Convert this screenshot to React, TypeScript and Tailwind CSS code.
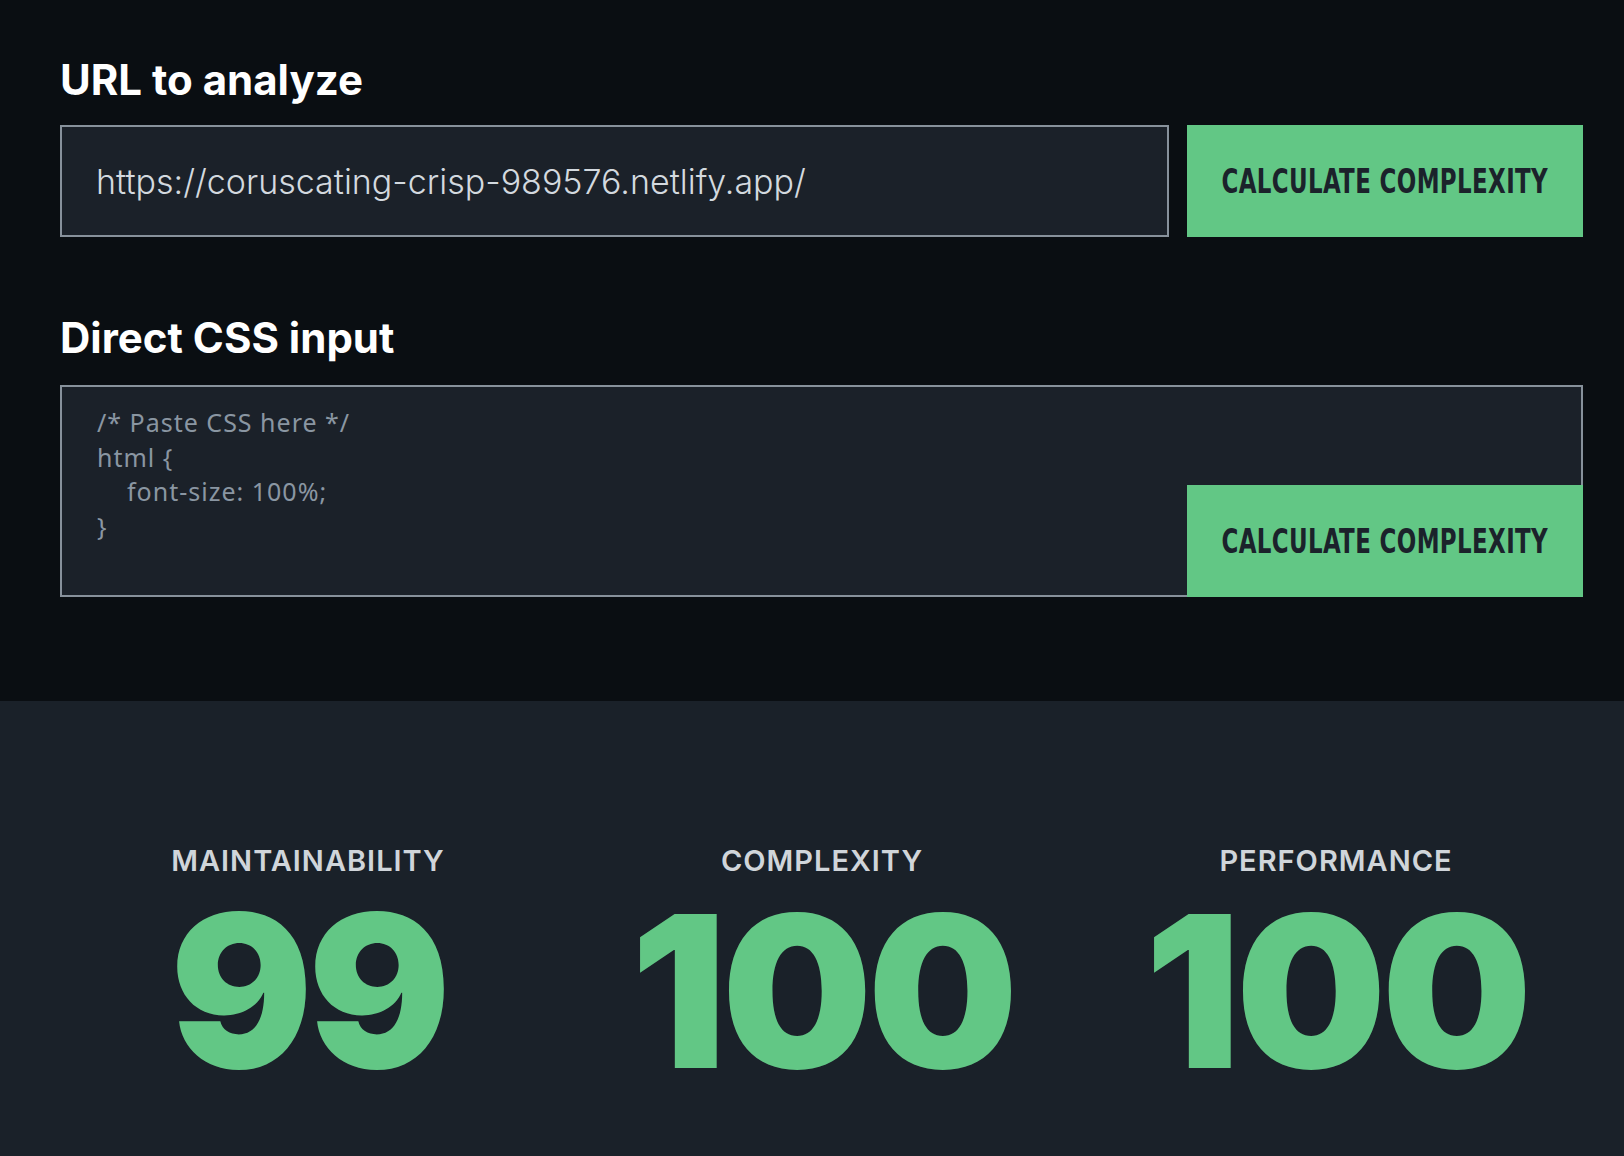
import { useState } from 'react'

const cssSample = `/* Paste CSS here */
html {
    font-size: 100%;
}`

interface Score {
  label: string
  value: number
}

const scores: Score[] = [
  { label: 'MAINTAINABILITY', value: 99 },
  { label: 'COMPLEXITY', value: 100 },
  { label: 'PERFORMANCE', value: 100 },
]

function CalcButton({ className = '' }: { className?: string }) {
  return (
    <button
      type="button"
      className={`flex h-[112px] w-[396px] items-center justify-center bg-[#62c785] text-[#1b222b] ${className}`}
    >
      <span className="inline-block scale-x-[0.75] whitespace-nowrap font-['DejaVu_Sans_Condensed','DejaVu_Sans',sans-serif] text-[34px] font-bold leading-none tracking-[0.5px]">
        CALCULATE COMPLEXITY
      </span>
    </button>
  )
}

export default function App() {
  const [url, setUrl] = useState('https://coruscating-crisp-989576.netlify.app/')
  const [css, setCss] = useState(cssSample)

  return (
    <div className="min-h-[1156px] bg-[#1a2129] font-['Inter',sans-serif]">
      {/* Inputs */}
      <section className="bg-[#0a0e12] pb-[104px] pl-[60px] pr-[41px] pt-[55px]">
        <h2 className="text-[42px] font-bold leading-[50px] text-white">URL to analyze</h2>
        <div className="mt-[20px] flex gap-[18px]">
          <input
            value={url}
            onChange={(e) => setUrl(e.target.value)}
            className="h-[112px] flex-1 border-2 border-[#87919b] bg-[#1b2129] px-[34px] text-[34px] font-light text-[#d3d9df] outline-none"
          />
          <CalcButton />
        </div>

        <h2 className="mt-[76px] text-[42px] font-bold leading-[50px] text-white">Direct CSS input</h2>
        <div className="relative mt-[22px] h-[212px]">
          <textarea
            value={css}
            onChange={(e) => setCss(e.target.value)}
            className="h-full w-full resize-none border-2 border-[#87919b] bg-[#1b2129] px-[35px] pt-[18px] font-['Noto_Sans',sans-serif] text-[25px] leading-[34.5px] tracking-[1px] text-[#8a96a2] outline-none"
          />
          <CalcButton className="absolute bottom-0 right-0" />
        </div>
      </section>

      {/* Scores */}
      <section className="grid grid-cols-3 pl-[51px] pr-[31px] pt-[145px]">
        {scores.map((s) => (
          <div key={s.label} className="flex flex-col items-center">
            <span className="text-[29px] font-semibold leading-none tracking-[1px] text-[#d0d5da]">
              {s.label}
            </span>
            <span className="mt-[10px] text-[212px] font-black leading-none tracking-[-5px] text-[#62c785]">
              {s.value}
            </span>
          </div>
        ))}
      </section>
    </div>
  )
}
